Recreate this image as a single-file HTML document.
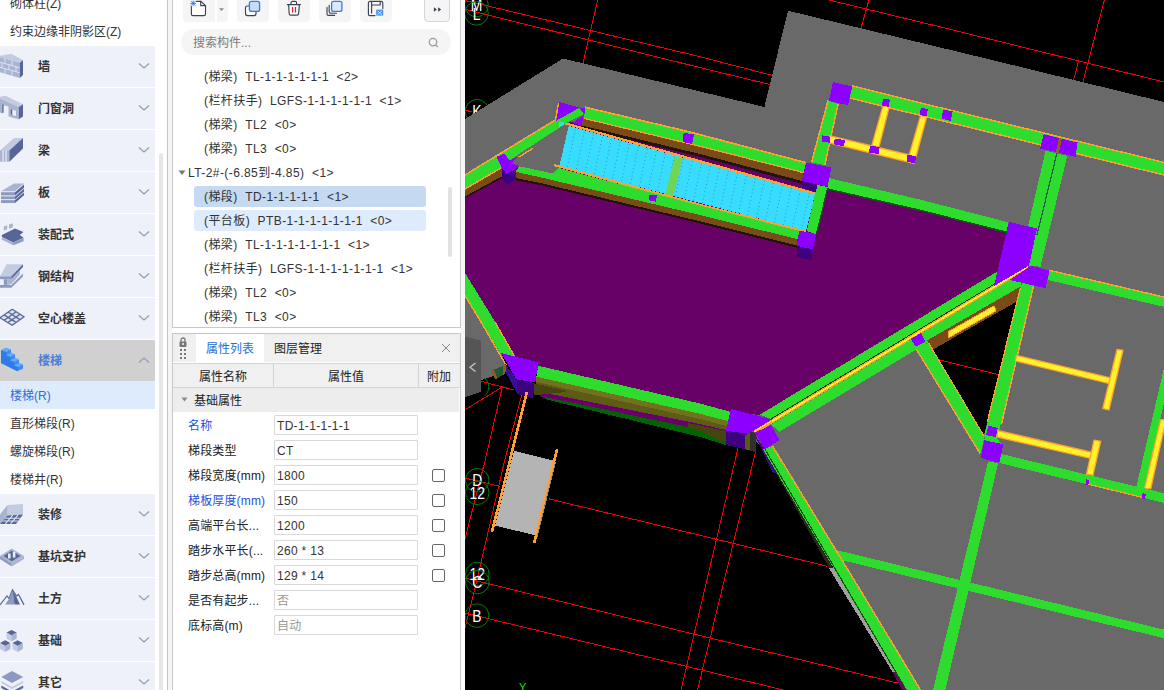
<!DOCTYPE html><html lang="zh"><head><meta charset="utf-8"><title>UI</title><style>
*{box-sizing:border-box;margin:0;padding:0}
html,body{width:1164px;height:690px;overflow:hidden;background:#fff}
body{position:relative;font-family:"Liberation Sans","Noto Sans CJK SC",sans-serif;font-size:12px;color:#333}
.abs{position:absolute}
.t{position:absolute;white-space:nowrap;line-height:16px;height:16px}
.cat{position:absolute;left:0;width:155px;height:40.5px;background:#EFF1F8}
.cat .lb{position:absolute;left:38px;top:13px;font-weight:bold;font-size:12px;line-height:16px;color:#333;white-space:nowrap}
.cat svg.ch{position:absolute;left:138px;top:16px}
.cat svg.ic{position:absolute;left:0;top:6px}
.sub{position:absolute;left:0;width:155px;height:28px}
.sub span{position:absolute;left:10px;top:7px;line-height:16px;white-space:nowrap}
.tb{position:absolute;top:-6px;height:28px;width:32px;background:#F5F5F5;border-radius:4px}
.li{position:absolute;left:204px;white-space:nowrap;line-height:16px;height:16px;color:#333;letter-spacing:0.42px}
.inp{position:absolute;left:274px;width:144px;height:20px;border:1px solid #D9D9D9;background:#fff;border-radius:1px}
.inp span{position:absolute;left:2px;top:2px;letter-spacing:0.3px;line-height:16px;white-space:nowrap}
.pl{position:absolute;left:188px;white-space:nowrap;line-height:16px;letter-spacing:0.15px}
.cb{position:absolute;left:432px;width:13px;height:13px;border:1px solid #666;border-radius:2px;background:#fff}
</style></head><body>
<div class="t" style="left:10px;top:-4px">砌体柱(Z)</div>
<div class="t" style="left:10px;top:24px">约束边缘非阴影区(Z)</div>
<div class="cat" style="top:46.0px;background:#EFF1F8"><svg class="ic" width="26" height="36" viewBox="0 0 26 36" style="top:7px"><polygon points="0,2.700 11.300,0.800 23,7 19.800,9.800 0,4.200" fill="#C3CBE2"/><polygon points="0,4.200 19.800,9.800 19.800,24.900 0,19.200" fill="#A9B4D2"/><polygon points="19.800,9.800 23,7 23,22 19.800,24.900" fill="#55679A"/><path d="M0 9.200 L19.800 14.800 M0 14.200 L19.800 19.800 M5 5.600 v5 M12 7.600 v5 M2 9.800 v5 M9 11.700 v5 M16 13.700 v5 M5 15.600 v5 M12 17.600 v5" stroke="#DDE2F0" stroke-width="1" fill="none"/></svg><div class="lb" style="color:#333">墙</div><svg class="ch" width="12" height="8" viewBox="0 0 12 8"><path d="M1 1.5 L6 6 L11 1.5" fill="none" stroke="#8F9BB8" stroke-width="1.2"/></svg></div>
<div class="cat" style="top:88.0px;background:#EFF1F8"><svg class="ic" width="26" height="36" viewBox="0 0 26 36" style="top:7px"><polygon points="0,1.700 5.600,0.800 23,9.300 18.800,12 0,3.600" fill="#C3CBE2"/><polygon points="0,3.600 18.800,12 18.800,24.300 8.500,21.500 8.500,11.600 2.200,9.800 2.200,18.200 0,17.600" fill="#A9B4D2"/><polygon points="18.800,12 23,9.300 23,21.600 18.800,24.300" fill="#55679A"/><polygon points="10.800,14.200 16,15.700 16,21 10.800,19.500" fill="#EFF1F8"/><polygon points="10.800,14.200 12.300,14.600 12.300,19.900 10.800,19.500" fill="#55679A"/><polygon points="2.200,9.800 3.600,9.300 3.600,17.400 2.200,18.200" fill="#55679A"/></svg><div class="lb" style="color:#333">门窗洞</div><svg class="ch" width="12" height="8" viewBox="0 0 12 8"><path d="M1 1.5 L6 6 L11 1.5" fill="none" stroke="#8F9BB8" stroke-width="1.2"/></svg></div>
<div class="cat" style="top:130.0px;background:#EFF1F8"><svg class="ic" width="26" height="36" viewBox="0 0 26 36" style="top:7px"><polygon points="0,13.400 14.100,1.100 23,1.100 9.400,13.400" fill="#C3CBE2"/><polygon points="0,13.400 9.400,13.400 9.400,24.700 0,24.700" fill="#A9B4D2"/><polygon points="9.400,13.400 23,1.100 23,11.500 9.400,24.700" fill="#55679A"/><path d="M3 13.400 v11.300 M6 13.400 v11.300" stroke="#EFF1F8" stroke-width="1.100"/></svg><div class="lb" style="color:#333">梁</div><svg class="ch" width="12" height="8" viewBox="0 0 12 8"><path d="M1 1.5 L6 6 L11 1.5" fill="none" stroke="#8F9BB8" stroke-width="1.2"/></svg></div>
<div class="cat" style="top:172.0px;background:#EFF1F8"><svg class="ic" width="26" height="36" viewBox="0 0 26 36" style="top:7px"><polygon points="1,12.300 14,4.600 24,4.600 15,12.300" fill="#A9B4D2"/><polygon points="1,13.200 15,13.200 15,16.400 1,16.400" fill="#8C9AC0"/><polygon points="15,13.200 24,5.500 24,8.700 15,16.400" fill="#55679A"/><polygon points="1,17.400 15,17.400 15,20.200 1,20.200" fill="#8C9AC0"/><polygon points="15,17.400 24,9.700 24,12.500 15,20.200" fill="#55679A"/><polygon points="1,21.100 15,21.100 15,24 1,24" fill="#8C9AC0"/><polygon points="15,21.100 24,13.400 24,16.300 15,24" fill="#55679A"/></svg><div class="lb" style="color:#333">板</div><svg class="ch" width="12" height="8" viewBox="0 0 12 8"><path d="M1 1.5 L6 6 L11 1.5" fill="none" stroke="#8F9BB8" stroke-width="1.2"/></svg></div>
<div class="cat" style="top:214.0px;background:#EFF1F8"><svg class="ic" width="26" height="36" viewBox="0 0 26 36" style="top:7px"><polygon points="3.800,5.500 7.200,4.200 7.200,8.300 3.800,9.600" fill="#A9B4D2"/><polygon points="9,3.600 12.800,2.300 12.800,6.400 9,7.700" fill="#A9B4D2"/><polygon points="1.900,14 15,7.400 23.500,11.100 19.800,14 23.500,16.800 13.200,21.500 1.900,15.900" fill="#55679A"/><polygon points="1.900,15.900 13.200,21.500 13.200,24.300 1.900,18.700" fill="#A9B4D2"/><polygon points="13.200,21.500 23.500,16.800 23.500,20.200 13.200,24.300" fill="#8C9AC0"/></svg><div class="lb" style="color:#333">装配式</div><svg class="ch" width="12" height="8" viewBox="0 0 12 8"><path d="M1 1.5 L6 6 L11 1.5" fill="none" stroke="#8F9BB8" stroke-width="1.2"/></svg></div>
<div class="cat" style="top:256.0px;background:#EFF1F8"><svg class="ic" width="26" height="36" viewBox="0 0 26 36" style="top:7px"><polygon points="6.600,1.200 23,1.200 11.300,13.400 0,13.400" fill="#C3CBE2"/><polygon points="0,13.400 11.300,13.400 11.300,16.200 0,16.200" fill="#8C9AC0"/><polygon points="11.300,13.400 23,1.200 23,4 11.300,16.200" fill="#55679A"/><polygon points="3.800,16.200 7.200,16.200 7.200,21.900 3.800,21.900" fill="#8C9AC0"/><polygon points="7.200,16.200 11.300,16.200 19.800,7.500 19.800,11.500 11.300,21 7.200,21.900" fill="#A9B4D2"/><polygon points="0,21.900 11.300,21.900 23,10.600 23,13.400 11.300,24.700 0,24.700" fill="#8C9AC0"/></svg><div class="lb" style="color:#333">钢结构</div><svg class="ch" width="12" height="8" viewBox="0 0 12 8"><path d="M1 1.5 L6 6 L11 1.5" fill="none" stroke="#8F9BB8" stroke-width="1.2"/></svg></div>
<div class="cat" style="top:298.0px;background:#EFF1F8"><svg class="ic" width="26" height="36" viewBox="0 0 26 36" style="top:7px"><polygon points="0,12.700 12.200,4.200 24,11.700 12.200,20.200" fill="#DDE2EF"/><path d="M0 12.700 L12.200 4.200 L24 11.700 L12.200 20.200 Z M4 9.900 L16.100 17.400 M8.100 7 L20 14.600 M4 15.500 L16.100 6.700 M8.100 17.400 L20 9.200" stroke="#55679A" stroke-width="1.300" fill="none"/></svg><div class="lb" style="color:#333">空心楼盖</div><svg class="ch" width="12" height="8" viewBox="0 0 12 8"><path d="M1 1.5 L6 6 L11 1.5" fill="none" stroke="#8F9BB8" stroke-width="1.2"/></svg></div>
<div class="cat" style="top:340.0px;background:#D0D0D0"><svg class="ic" width="26" height="36" viewBox="0 0 26 36" style="top:2px"><g transform="translate(0,0.760) scale(1,0.840)"><polygon points="1,9 6,6 11,8 11,12 15,14 15,18 19,20 19,24 23,26 23,31 17,34 1,24" fill="#3E8BEF"/><polygon points="1,9 6,6 11,8 6,11" fill="#6AAAF8"/><polygon points="6,15 11,12 15,14 10,17" fill="#6AAAF8"/><polygon points="10,21 15,18 19,20 14,23" fill="#6AAAF8"/><polygon points="14,27 19,24 23,26 18,29" fill="#6AAAF8"/><polygon points="1,9 6,11 6,15 10,17 10,21 14,23 14,27 18,29 18,34 1,24" fill="#2F7BE8"/></g></svg><div class="lb" style="color:#4A7DD8">楼梯</div><svg class="ch" width="12" height="8" viewBox="0 0 12 8"><path d="M1 6.5 L6 2 L11 6.5" fill="none" stroke="#8F9BB8" stroke-width="1.2"/></svg></div>
<div class="sub" style="top:381px;background:#DEEBFC"><span style="color:#2E6BD6">楼梯(R)</span></div>
<div class="sub" style="top:409px"><span>直形梯段(R)</span></div>
<div class="sub" style="top:437px"><span>螺旋梯段(R)</span></div>
<div class="sub" style="top:465px"><span>楼梯井(R)</span></div>
<div class="cat" style="top:494.0px;background:#EFF1F8"><svg class="ic" width="26" height="36" viewBox="0 0 26 36" style="top:7px"><polygon points="7.500,4 23,3.100 23,13.500 7.500,14.400" fill="#C3CBE2"/><polygon points="0,13.500 7.500,4 7.500,14.400 0,22.900" fill="#A9B4D2"/><polygon points="0,22.900 7.500,14.400 23,13.500 16,22.900" fill="#55679A"/><path d="M2.500 20 h15.500 M5 17.200 h15.500 M5.300 22.900 l7.500 -8.800 M10.600 22.900 l7.500 -9" stroke="#DDE2F0" stroke-width="1.100"/></svg><div class="lb" style="color:#333">装修</div><svg class="ch" width="12" height="8" viewBox="0 0 12 8"><path d="M1 1.5 L6 6 L11 1.5" fill="none" stroke="#8F9BB8" stroke-width="1.2"/></svg></div>
<div class="cat" style="top:536.0px;background:#EFF1F8"><svg class="ic" width="26" height="36" viewBox="0 0 26 36" style="top:7px"><polygon points="0,12.900 11.700,5.400 24,12.900 11.700,20.500" fill="#A9B4D2"/><polygon points="0,12.900 11.700,20.500 11.700,23.500 0,15.900" fill="#8C9AC0"/><polygon points="11.700,20.500 24,12.900 24,15.900 11.700,23.500" fill="#A9B4D2"/><polygon points="3.500,12.900 11.700,7.700 20.500,12.900 11.700,18.200" fill="#55679A"/><rect x="8" y="10.500" width="2.600" height="5" fill="#E6EAF5"/><rect x="12.800" y="8.600" width="2.600" height="6" fill="#E6EAF5"/></svg><div class="lb" style="color:#333">基坑支护</div><svg class="ch" width="12" height="8" viewBox="0 0 12 8"><path d="M1 1.5 L6 6 L11 1.5" fill="none" stroke="#8F9BB8" stroke-width="1.2"/></svg></div>
<div class="cat" style="top:578.0px;background:#EFF1F8"><svg class="ic" width="26" height="36" viewBox="0 0 26 36" style="top:7px"><path d="M0 19.900 L7 11 L9 13.500 L12.500 4.800 L16.500 11 L18.500 9.500 L24 19.900" fill="none" stroke="#55679A" stroke-width="1.200"/><polygon points="9,14 12.500,5.500 14.500,19.500 5,19.500" fill="#8C9AC0"/><polygon points="12.500,5.500 16.500,12 20,19.500 14.500,19.500" fill="#55679A"/></svg><div class="lb" style="color:#333">土方</div><svg class="ch" width="12" height="8" viewBox="0 0 12 8"><path d="M1 1.5 L6 6 L11 1.5" fill="none" stroke="#8F9BB8" stroke-width="1.2"/></svg></div>
<div class="cat" style="top:620.0px;background:#EFF1F8"><svg class="ic" width="26" height="36" viewBox="0 0 26 36" style="top:7px"><polygon points="6.500,5.600 11.500,3 16.700,5.600 11.500,8.500" fill="#55679A"/><polygon points="6.500,5.600 11.500,8.500 11.500,14.500 6.500,11.500" fill="#C3CBE2"/><polygon points="11.500,8.500 16.700,5.600 16.700,11.500 11.500,14.500" fill="#A9B4D2"/><polygon points="0,16.100 5.200,13.200 10.400,16.100 5.200,19" fill="#55679A"/><polygon points="0,16.100 5.200,19 5.200,25 0,22" fill="#C3CBE2"/><polygon points="5.200,19 10.400,16.100 10.400,22 5.200,25" fill="#A9B4D2"/><polygon points="12.400,16.100 17.600,13.200 22.800,16.100 17.600,19" fill="#55679A"/><polygon points="12.400,16.100 17.600,19 17.600,25 12.400,22" fill="#C3CBE2"/><polygon points="17.600,19 22.800,16.100 22.800,22 17.600,25" fill="#A9B4D2"/></svg><div class="lb" style="color:#333">基础</div><svg class="ch" width="12" height="8" viewBox="0 0 12 8"><path d="M1 1.5 L6 6 L11 1.5" fill="none" stroke="#8F9BB8" stroke-width="1.2"/></svg></div>
<div class="cat" style="top:662.0px;background:#EFF1F8"><svg class="ic" width="26" height="36" viewBox="0 0 26 36" style="top:7px"><polygon points="1.300,16.500 12,22.400 23.200,16.500 23.200,19 12,25 1.300,19" fill="#55679A"/><polygon points="1.300,11.900 12,17.800 23.200,11.900 23.200,14 12,20 1.300,14" fill="#C3CBE2"/><polygon points="1.300,8 12,2.100 23.200,8 12,13.900" fill="#8C9AC0"/></svg><div class="lb" style="color:#333">其它</div><svg class="ch" width="12" height="8" viewBox="0 0 12 8"><path d="M1 1.5 L6 6 L11 1.5" fill="none" stroke="#8F9BB8" stroke-width="1.2"/></svg></div>
<div class="abs" style="left:159px;top:153px;width:4px;height:540px;background:#E6E6E6;border-radius:2px"></div>
<div class="abs" style="left:167px;top:0;width:1px;height:690px;background:#C4C4C4"></div>
<div class="abs" style="left:168px;top:0;width:4px;height:690px;background:#F5F5F5"></div>
<div class="abs" style="left:172px;top:-2px;width:289px;height:330px;border:1px solid #C8C8C8;background:#fff"></div>
<div class="tb" style="left:183px;width:45px"></div><div class="abs" style="left:215px;top:0;width:1.5px;height:22px;background:#fff"></div>
<div class="tb" style="left:237px"></div>
<div class="tb" style="left:278px"></div>
<div class="tb" style="left:319px"></div>
<div class="tb" style="left:360px"></div>
<div class="tb" style="left:424px;width:26px;border:1px solid #D6D6D6"></div>
<svg class="abs" style="left:176px;top:0" width="280" height="24" viewBox="176 0 280 24">
<g fill="none" stroke="#3A4356" stroke-width="1.15" stroke-linejoin="round" stroke-linecap="round">
<path d="M196.500 1.300 H200.700 L205.500 5.600 V14 a1.600 1.600 0 0 1 -1.600 1.600 H193 a1.600 1.600 0 0 1 -1.600 -1.600 V6.500" fill="#fff"/><path d="M200.700 1.300 V5.600 H205.500"/>
<rect x="245.500" y="6" width="10.500" height="9.600" rx="2" fill="#fff"/>
<path d="M287.300 4.600 H300.500 M291 4.600 V3 a1.600 1.600 0 0 1 1.600 -1.600 H295 a1.600 1.600 0 0 1 1.600 1.600 V4.600 M288.600 4.600 L289.200 13.600 a1.600 1.600 0 0 0 1.600 1.500 H297 a1.600 1.600 0 0 0 1.600 -1.500 L299.400 4.600" fill="#fff"/>
<path d="M329.200 5.400 V11.600 a1.600 1.600 0 0 0 1.600 1.600 H336.500 M327 7.400 V13.800 a1.600 1.600 0 0 0 1.600 1.600 H334.600"/>
<path d="M375 15.600 H370 a1.600 1.600 0 0 1 -1.600 -1.600 V3 a1.600 1.600 0 0 1 1.600 -1.600 H381.200 a1.600 1.600 0 0 1 1.600 1.600 V8.400 M371.600 1.400 V13 M371.600 5 H380.200 M380.200 1.400 V5"/>
</g>
<path d="M191 1.200 l4.400 4.400 M195.400 1.200 l-4.400 4.400 M193.200 0.600 v5.600 M190.400 3.400 h5.600" stroke="#2E7BE6" stroke-width="0.900"/>
<polygon points="219,8.200 224,8.200 221.500,11" fill="#8A8A8A"/>
<rect x="249.400" y="1.400" width="10.200" height="10" rx="2" fill="#C8DBF6" stroke="#2D7FF0" stroke-width="1.300"/>
<path d="M292.600 7 V12.600 M295.500 7 V12.600" stroke="#E02020" stroke-width="1.200"/>
<rect x="331.600" y="1.400" width="10.300" height="10" rx="2" fill="#DDE9FB" stroke="#2D7FF0" stroke-width="1.300"/>
<rect x="376.200" y="9.600" width="7" height="6" fill="#4A90F0"/><path d="M377.500 11 l4.400 3.400 M381.900 11 l-4.400 3.400" stroke="#DCE9FB" stroke-width="0.900"/>
<polygon points="433.900,7.200 436.900,9.500 433.900,11.800" fill="#3A4356"/><polygon points="438.100,7.200 441.200,9.500 438.100,11.800" fill="#3A4356"/>
</svg>
<div class="abs" style="left:181px;top:29px;width:270px;height:26px;border-radius:13px;background:#F5F5F5"></div>
<div class="t" style="left:193px;top:35px;color:#7C7C7C">搜索构件...</div>
<svg class="abs" style="left:427px;top:36px" width="14" height="14" viewBox="427 36 14 14"><circle cx="433" cy="42.100" r="3.700" fill="none" stroke="#9A9A9A" stroke-width="1.200"/><path d="M435.700 44.800 L437.800 47" stroke="#9A9A9A" stroke-width="1.200"/></svg>
<div class="abs" style="left:194px;top:186px;width:232px;height:21px;background:#C5D9F1;border-radius:3px"></div>
<div class="abs" style="left:194px;top:210px;width:232px;height:21px;background:#DDEBFC;border-radius:3px"></div>
<div class="li" style="top:69px;white-space:pre">(梯梁)  TL-1-1-1-1-1-1  &lt;2&gt;</div>
<div class="li" style="top:93px;white-space:pre">(栏杆扶手)  LGFS-1-1-1-1-1-1  &lt;1&gt;</div>
<div class="li" style="top:117px;white-space:pre">(梯梁)  TL2  &lt;0&gt;</div>
<div class="li" style="top:141px;white-space:pre">(梯梁)  TL3  &lt;0&gt;</div>
<div class="li" style="top:189px;white-space:pre">(梯段)  TD-1-1-1-1-1  &lt;1&gt;</div>
<div class="li" style="top:213px;white-space:pre">(平台板)  PTB-1-1-1-1-1-1-1  &lt;0&gt;</div>
<div class="li" style="top:237px;white-space:pre">(梯梁)  TL-1-1-1-1-1-1-1  &lt;1&gt;</div>
<div class="li" style="top:261px;white-space:pre">(栏杆扶手)  LGFS-1-1-1-1-1-1-1  &lt;1&gt;</div>
<div class="li" style="top:285px;white-space:pre">(梯梁)  TL2  &lt;0&gt;</div>
<div class="li" style="top:309px;white-space:pre">(梯梁)  TL3  &lt;0&gt;</div>
<div class="li" style="left:188px;top:165px;white-space:pre">LT-2#-(-6.85到-4.85)  &lt;1&gt;</div>
<svg class="abs" style="left:178px;top:170px" width="8" height="6" viewBox="0 0 8 6"><polygon points="0.500,0.500 7.500,0.500 4,5" fill="#777"/></svg>
<div class="abs" style="left:448px;top:187px;width:4px;height:70px;background:#E2E2E2;border-radius:2px"></div>
<div class="abs" style="left:172px;top:333px;width:289px;height:360px;border:1px solid #C8C8C8;background:#fff"></div>
<div class="abs" style="left:173px;top:334px;width:287px;height:28px;background:#F0F0F0"></div>
<div class="abs" style="left:196px;top:334px;width:68px;height:28px;background:#fff"></div>
<div class="t" style="left:206px;top:341px;color:#1E6FD9">属性列表</div>
<div class="t" style="left:274px;top:341px;color:#222">图层管理</div>
<svg class="abs" style="left:441px;top:343px" width="10" height="10" viewBox="0 0 10 10"><path d="M1 1 L9 9 M9 1 L1 9" stroke="#888" stroke-width="1"/></svg>
<svg class="abs" style="left:178px;top:336px" width="10" height="24" viewBox="0 0 10 24"><path d="M3 6 v-2 a2 2 0 0 1 4 0 v2" fill="none" stroke="#777" stroke-width="1.300"/><rect x="1.500" y="5.500" width="7" height="5.500" rx="1" fill="#777"/><rect x="4.300" y="7" width="1.400" height="2" fill="#fff"/>
<g fill="#777"><rect x="2" y="13" width="2" height="2"/><rect x="6" y="13" width="2" height="2"/><rect x="2" y="17" width="2" height="2"/><rect x="6" y="17" width="2" height="2"/><rect x="2" y="21" width="2" height="2"/><rect x="6" y="21" width="2" height="2"/></g></svg>
<div class="abs" style="left:173px;top:363px;width:287px;height:25px;background:#F0F0F0;border-top:1px solid #D4D4D4;border-bottom:1px solid #D4D4D4"></div>
<div class="abs" style="left:273px;top:363px;width:1px;height:24px;background:#D4D4D4"></div><div class="abs" style="left:418px;top:363px;width:1px;height:24px;background:#D4D4D4"></div>
<div class="t" style="left:199px;top:369px;color:#222">属性名称</div><div class="t" style="left:328px;top:369px;color:#222">属性值</div><div class="t" style="left:427px;top:369px;color:#222">附加</div>
<div class="abs" style="left:173px;top:388px;width:286px;height:24px;background:#EDEDED"></div>
<svg class="abs" style="left:181px;top:397px" width="7" height="5" viewBox="0 0 7 5"><polygon points="0.500,0.500 6.500,0.500 3.500,4.500" fill="#888"/></svg>
<div class="t" style="left:194px;top:393px;color:#222">基础属性</div>
<div class="pl" style="top:418px;color:#1F4FE0">名称</div>
<div class="inp" style="top:415px"><span style="color:#333">TD-1-1-1-1-1</span></div>
<div class="pl" style="top:443px;color:#222">梯段类型</div>
<div class="inp" style="top:440px"><span style="color:#333">CT</span></div>
<div class="pl" style="top:468px;color:#222">梯段宽度(mm)</div>
<div class="inp" style="top:465px"><span style="color:#333">1800</span></div>
<div class="cb" style="top:468.5px"></div>
<div class="pl" style="top:493px;color:#1F4FE0">梯板厚度(mm)</div>
<div class="inp" style="top:490px"><span style="color:#333">150</span></div>
<div class="cb" style="top:493.5px"></div>
<div class="pl" style="top:518px;color:#222">高端平台长...</div>
<div class="inp" style="top:515px"><span style="color:#333">1200</span></div>
<div class="cb" style="top:518.5px"></div>
<div class="pl" style="top:543px;color:#222">踏步水平长(...</div>
<div class="inp" style="top:540px"><span style="color:#333">260 * 13</span></div>
<div class="cb" style="top:543.5px"></div>
<div class="pl" style="top:568px;color:#222">踏步总高(mm)</div>
<div class="inp" style="top:565px"><span style="color:#333">129 * 14</span></div>
<div class="cb" style="top:568.5px"></div>
<div class="pl" style="top:593px;color:#222">是否有起步...</div>
<div class="inp" style="top:590px"><span style="color:#999">否</span></div>
<div class="pl" style="top:618px;color:#222">底标高(m)</div>
<div class="inp" style="top:615px"><span style="color:#999">自动</span></div>
<div class="abs" style="left:461px;top:0;width:4px;height:690px;background:#F6F6F6"></div>
<div class="abs" style="left:461px;top:600px;width:4px;height:90px;background:#fff"></div>
<svg class="abs" style="left:465px;top:0;background:#000" width="699" height="690" viewBox="465 0 699 690" shape-rendering="crispEdges">
<defs><pattern id="dots" width="9" height="3.6" patternUnits="userSpaceOnUse" patternTransform="matrix(1 0.27 -0.21 1 0 0)"><rect width="9" height="3.6" fill="#38DCFF"/><rect x="3" y="1" width="1" height="1" fill="#2E8CB4"/></pattern></defs>
<line x1="465.0" y1="0.5" x2="700.0" y2="56.7" stroke="#F00000" stroke-width="1"/>
<line x1="700.0" y1="56.7" x2="772.0" y2="75.3" stroke="#F00000" stroke-width="1"/>
<line x1="465.0" y1="9.3" x2="700.0" y2="67.6" stroke="#F00000" stroke-width="1"/>
<line x1="700.0" y1="67.6" x2="770.0" y2="84.5" stroke="#F00000" stroke-width="1"/>
<line x1="597.7" y1="0.0" x2="583.0" y2="63.0" stroke="#F00000" stroke-width="1"/>
<line x1="829.0" y1="0.0" x2="940.0" y2="26.8" stroke="#F00000" stroke-width="1"/>
<line x1="940.0" y1="26.8" x2="1164.0" y2="82.0" stroke="#F00000" stroke-width="1"/>
<line x1="869.0" y1="0.0" x2="861.0" y2="28.0" stroke="#F00000" stroke-width="1"/>
<line x1="1104.4" y1="0.0" x2="1082.8" y2="82.5" stroke="#F00000" stroke-width="1"/>
<line x1="1078.6" y1="60.8" x2="1073.5" y2="80.4" stroke="#F00000" stroke-width="1"/>
<line x1="465.0" y1="110.0" x2="472.0" y2="112.0" stroke="#F00000" stroke-width="1"/>
<line x1="502.3" y1="387.0" x2="465.0" y2="409.7" stroke="#F00000" stroke-width="1"/>
<line x1="502.3" y1="387.0" x2="484.7" y2="462.0" stroke="#F00000" stroke-width="1"/>
<line x1="484.7" y1="462.0" x2="465.0" y2="539.0" stroke="#F00000" stroke-width="1"/>
<line x1="521.9" y1="394.2" x2="504.3" y2="462.0" stroke="#F00000" stroke-width="1"/>
<line x1="504.3" y1="462.0" x2="476.5" y2="582.0" stroke="#F00000" stroke-width="1"/>
<line x1="476.5" y1="582.0" x2="465.0" y2="628.0" stroke="#F00000" stroke-width="1"/>
<line x1="480.0" y1="381.0" x2="514.0" y2="390.0" stroke="#F00000" stroke-width="1"/>
<line x1="465.0" y1="478.0" x2="500.0" y2="486.4" stroke="#F00000" stroke-width="1"/>
<line x1="548.7" y1="498.8" x2="700.0" y2="535.3" stroke="#F00000" stroke-width="1"/>
<line x1="700.0" y1="535.3" x2="827.0" y2="566.2" stroke="#F00000" stroke-width="1"/>
<line x1="465.0" y1="578.0" x2="700.0" y2="635.6" stroke="#F00000" stroke-width="1"/>
<line x1="700.0" y1="635.6" x2="897.5" y2="683.0" stroke="#F00000" stroke-width="1"/>
<line x1="465.0" y1="613.0" x2="700.0" y2="669.6" stroke="#F00000" stroke-width="1"/>
<line x1="700.0" y1="669.6" x2="783.0" y2="690.0" stroke="#F00000" stroke-width="1"/>
<line x1="738.0" y1="448.0" x2="681.0" y2="690.0" stroke="#F00000" stroke-width="1"/>
<line x1="755.7" y1="451.3" x2="697.5" y2="690.0" stroke="#F00000" stroke-width="1"/>
<circle cx="477" cy="111.3" r="11.8" fill="none" stroke="#008000" stroke-width="1" shape-rendering="auto"/><text transform="translate(477,117.4) scale(0.82,1)" text-anchor="middle" font-family='"Liberation Sans",sans-serif' font-size="17" fill="#fff">K</text>
<polygon points="465.0,119.0 563.0,58.5 764.4,107.0 788.0,10.7 992.0,60.0 1164.0,102.0 1164.0,690.0 907.0,690.0 766.0,450.0 745.0,432.0 731.0,412.0 520.0,365.0 465.0,273.0" fill="#696969"/>
<polygon points="465.0,293.0 502.0,355.0 506.0,365.0 506.0,372.0 481.0,380.0 465.0,385.0" fill="#696969"/>
<polygon points="465.0,195.0 506.0,172.0 560.0,120.0 806.0,165.0 830.0,185.0 1010.0,225.0 1000.0,283.0 760.0,415.0 731.0,412.0 538.0,366.0 514.0,356.0 465.0,273.0" fill="#670067"/>
<polygon points="581.6,125.4 700.0,154.0 802.0,181.0 802.0,183.8 700.0,156.8 581.6,128.2" fill="#1E1408"/>
<polygon points="567.0,125.4 815.0,194.4 806.0,231.0 559.0,166.0" fill="url(#dots)"/>
<polygon points="674.4,157.3 682.7,158.4 673.4,196.5 665.2,194.4" fill="#70D458"/>
<polygon points="570.0,120.0 557.2,176.0 506.0,163.0" fill="#696969"/>
<polygon points="563.7,124.1 699.7,162.3 700.3,160.1 564.3,121.9" fill="#FFA030"/>
<polygon points="699.7,162.3 814.7,194.5 815.3,192.3 700.3,160.1" fill="#FFA030"/>
<polygon points="553.5,166.0 699.7,205.8 700.3,203.8 554.1,164.0" fill="#FFA030"/>
<polygon points="699.8,205.8 805.6,232.5 806.0,230.5 700.2,203.8" fill="#FFA030"/>
<polygon points="557.8,172.8 639.8,191.3 640.2,189.7 558.2,171.2" fill="#FFA030"/>
<polygon points="585.0,108.0 690.0,132.8 806.0,163.5 803.7,172.4 700.0,146.0 583.7,118.0" fill="#2EDC2E"/>
<polygon points="583.7,118.0 700.0,146.0 803.7,172.4 802.0,181.0 700.0,154.0 581.6,125.4" fill="#7A4A18"/>
<polygon points="584.8,108.0 689.8,132.8 690.2,131.2 585.2,106.4" fill="#FFA030"/>
<polygon points="689.8,132.8 805.8,163.5 806.2,161.9 690.2,131.2" fill="#FFA030"/>
<polygon points="583.6,118.9 699.9,146.9 700.1,145.7 583.8,117.7" fill="#FFA030"/>
<polygon points="699.9,146.9 803.6,173.3 803.8,172.1 700.1,145.7" fill="#FFA030"/>
<polygon points="518.8,166.2 553.0,173.5 559.0,168.0 700.0,205.5 799.6,231.0 797.5,239.2 700.0,215.0 540.0,177.2 515.7,171.8" fill="#2EDC2E"/>
<polygon points="515.7,171.8 540.0,177.2 700.0,215.0 797.5,239.2 796.5,245.4 700.0,221.3 540.0,182.9 515.7,178.0" fill="#7A4A18"/>
<polygon points="515.7,178.0 540.0,182.9 700.0,221.3 796.5,245.4 796.5,247.6 700.0,223.5 540.0,185.1 515.7,180.2" fill="#1E1408"/>
<polygon points="465.0,175.4 554.0,121.2 579.0,108.2 584.0,114.1 570.2,120.7 509.3,160.3 501.0,167.8 465.0,188.9" fill="#2EDC2E"/>
<polygon points="502.0,167.6 465.0,188.9 465.0,196.7 502.0,176.5" fill="#7A4A18"/>
<polygon points="501.6,176.5 464.6,196.7 465.4,198.1 502.4,177.9" fill="#1E1408"/>
<polygon points="555.6,118.9 464.6,174.3 465.4,175.7 556.4,120.3" fill="#FFA030"/>
<polygon points="500.7,167.4 464.6,188.4 465.4,189.6 501.5,168.6" fill="#FFA030"/>
<polygon points="518.8,157.8 533.3,148.9 532.7,147.7 518.2,156.6" fill="#FFA030"/>
<polygon points="817.0,185.0 806.8,231.0 816.0,234.0 827.4,187.0" fill="#2EDC2E"/>
<polygon points="827.3,186.8 815.9,233.8 817.3,234.2 828.7,187.2" fill="#145014"/>
<polygon points="559.3,102.2 580.0,107.4 556.5,120.6" fill="#8C00FF"/>
<polygon points="572.5,123.0 583.8,115.0 581.6,125.5" fill="#8C00FF"/>
<polygon points="579.0,107.2 585.5,108.7 584.3,114.5" fill="#8C00FF"/>
<polygon points="559.3,122.3 564.2,122.3 563.7,125.0 558.8,127.2" fill="#38DCFF"/>
<polygon points="557.9,102.9 554.6,120.5 556.0,120.7 559.3,103.1" fill="#FFA030"/>
<polygon points="496.3,157.0 504.3,153.5 509.4,160.4 517.7,157.0 511.6,163.5 519.0,166.0 514.2,170.0 506.3,174.0 502.0,167.8" fill="#8C00FF"/>
<polygon points="502.0,167.8 506.3,174.0 514.2,170.0 515.0,180.0 506.8,185.2 502.4,178.3" fill="#3D0080"/>
<polygon points="649.7,194.4 657.0,195.5 656.0,201.6 648.7,200.2" fill="#8C00FF"/>
<polygon points="683.7,132.6 694.0,134.6 692.0,144.0 682.7,141.9" fill="#8C00FF"/>
<polygon points="799.6,230.5 816.0,234.0 813.0,249.5 796.5,245.8" fill="#8C00FF"/>
<polygon points="796.5,245.8 813.0,249.5 811.5,260.2 796.5,256.7" fill="#3D0080"/>
<polygon points="828.5,100.6 812.0,162.5 824.3,165.0 837.7,103.7" fill="#2EDC2E"/>
<polygon points="827.3,100.4 810.8,162.3 812.2,162.7 828.7,100.8" fill="#FFA030"/>
<polygon points="837.5,103.6 824.1,164.9 825.5,165.1 838.9,103.8" fill="#FFA030"/>
<polygon points="851.5,86.2 924.0,104.3 1164.0,163.0 1164.0,174.4 924.0,115.7 850.0,97.5" fill="#2EDC2E"/>
<polygon points="851.3,86.3 923.8,104.4 924.2,103.0 851.7,84.9" fill="#FFA030"/>
<polygon points="923.8,104.4 1163.8,163.1 1164.2,161.7 924.2,103.0" fill="#FFA030"/>
<polygon points="849.8,98.8 923.8,117.0 924.2,115.6 850.2,97.4" fill="#FFA030"/>
<polygon points="923.8,117.0 1163.8,175.7 1164.2,174.3 924.2,115.6" fill="#FFA030"/>
<polygon points="829.5,135.7 915.0,156.3 914.0,163.5 829.5,142.9" fill="#FFF22A" stroke="#FFA030" stroke-width="1.3" shape-rendering="geometricPrecision"/>
<polygon points="883.0,105.8 889.3,106.8 879.0,147.0 871.8,145.6" fill="#FFF22A" stroke="#FFA030" stroke-width="1.3" shape-rendering="geometricPrecision"/>
<polygon points="920.6,115.5 926.8,116.5 916.0,157.0 909.0,155.5" fill="#FFF22A" stroke="#FFA030" stroke-width="1.3" shape-rendering="geometricPrecision"/>
<polygon points="883.0,98.6 890.0,99.6 888.7,106.8 882.0,105.8" fill="#8C00FF"/>
<polygon points="921.0,107.6 927.8,109.3 926.4,116.5 919.6,114.8" fill="#8C00FF"/>
<polygon points="943.0,109.5 952.5,111.5 950.8,120.8 941.5,118.8" fill="#8C00FF"/>
<polygon points="822.3,135.3 830.5,136.7 829.5,142.9 821.9,141.4" fill="#8C00FF"/>
<polygon points="834.6,138.4 845.0,140.2 844.0,146.4 834.2,144.3" fill="#8C00FF"/>
<polygon points="869.7,145.6 879.6,147.0 879.0,154.2 869.3,152.6" fill="#8C00FF"/>
<polygon points="907.4,154.6 916.0,156.3 915.0,163.5 906.8,161.4" fill="#8C00FF"/>
<polygon points="833.0,82.0 852.2,86.6 848.0,105.2 828.9,101.0" fill="#8C00FF"/>
<polygon points="827.4,188.2 920.0,209.5 1006.5,231.5 1006.5,233.1 920.0,211.1 827.4,189.8" fill="#0A5A0A"/>
<polygon points="828.5,178.0 920.0,199.6 1008.5,222.3 1006.5,231.5 920.0,209.5 827.4,188.2" fill="#2EDC2E"/>
<polygon points="806.2,162.5 831.5,167.6 827.4,186.8 802.0,181.0" fill="#8C00FF"/>
<polygon points="802.0,181.0 817.0,184.7 816.0,192.4 802.0,188.0" fill="#3D0080"/>
<polygon points="1045.6,150.7 1028.0,226.4 1029.0,266.0 1040.5,266.6 1040.5,266.6 1067.3,155.9" fill="#2EDC2E"/>
<polygon points="1056.4,152.7 1036.4,234.9 1037.6,235.1 1057.6,152.9" fill="#1E5A46"/>
<polygon points="1043.6,134.2 1059.0,138.0 1056.0,151.8 1040.0,148.7" fill="#8C00FF"/>
<polygon points="1061.7,138.8 1077.6,142.5 1075.5,157.0 1059.0,152.8" fill="#8C00FF"/>
<polygon points="1059.0,138.0 1061.7,138.8 1059.0,152.8 1056.0,151.8" fill="#8A6414"/>
<polygon points="1003.0,268.0 759.8,414.6 772.0,419.4 1012.0,274.3" fill="#2EDC2E"/>
<polygon points="1022.0,272.5 771.0,424.5 779.4,431.6 1020.8,286.8" fill="#2EDC2E"/>
<polygon points="1009.6,274.4 769.6,419.2 770.4,420.4 1010.4,275.6" fill="#0A3C0A"/>
<polygon points="1027.0,264.9 753.6,430.1 755.6,433.5 1029.0,268.3" fill="#FFA030"/>
<polygon points="1027.6,265.9 754.2,431.1 755.0,432.5 1028.4,267.3" fill="#FFF22A"/>
<polygon points="1019.8,287.0 1016.7,301.6 932.2,350.0 927.0,340.5" fill="#7A4A18"/>
<polygon points="1016.7,301.6 983.8,436.0 932.2,350.0" fill="#000"/>
<line x1="937.3" y1="359.4" x2="999.0" y2="374.8" stroke="#F00000" stroke-width="1"/>
<polygon points="948.7,331.5 994.0,305.8 996.0,311.0 948.7,337.7" fill="#FFF22A" stroke="#FFA030" stroke-width="1"/>
<polygon points="916.7,349.0 980.7,453.6 984.5,437.0 928.0,342.9" fill="#2EDC2E"/>
<polygon points="915.6,349.4 979.6,454.0 980.8,453.2 916.8,348.6" fill="#FFA030"/>
<polygon points="928.0,343.2 983.5,436.3 984.5,435.7 929.0,342.6" fill="#FFA030"/>
<polygon points="1022.5,281.0 987.8,422.0 984.0,437.0 996.0,440.0 1001.5,422.0 1034.5,280.0" fill="#2EDC2E"/>
<polygon points="1019.7,287.9 986.7,421.9 987.9,422.1 1020.9,288.1" fill="#FFA030"/>
<polygon points="1032.8,285.8 1000.8,423.8 1002.2,424.2 1034.2,286.2" fill="#FFA030"/>
<polygon points="910.5,338.8 920.8,333.2 925.6,341.9 915.7,346.4" fill="#8C00FF"/>
<polygon points="1009.0,221.9 1037.0,228.5 1029.0,265.6 994.0,286.0" fill="#8C00FF"/>
<polygon points="1031.0,265.6 1049.4,270.7 1045.6,288.2 1009.6,280.0" fill="#8C00FF"/>
<polygon points="1049.4,270.7 1164.0,297.5 1164.0,306.8 1047.7,280.0" fill="#2EDC2E"/>
<polygon points="1049.2,271.0 1163.8,297.8 1164.2,296.4 1049.6,269.6" fill="#FFA030"/>
<polygon points="1016.4,355.3 1111.8,378.2 1110.0,383.8 1015.5,361.0" fill="#FFF22A" stroke="#FFA030" stroke-width="1.3" shape-rendering="geometricPrecision"/>
<polygon points="1117.0,349.5 1123.0,350.2 1109.0,410.0 1102.8,408.6" fill="#FFF22A" stroke="#FFA030" stroke-width="1.3" shape-rendering="geometricPrecision"/>
<polygon points="997.8,430.5 1093.0,452.6 1092.0,458.8 997.0,437.0" fill="#FFF22A" stroke="#FFA030" stroke-width="1.3" shape-rendering="geometricPrecision"/>
<polygon points="1094.0,440.2 1100.7,441.2 1093.0,475.3 1086.5,474.2" fill="#FFF22A" stroke="#FFA030" stroke-width="1.3" shape-rendering="geometricPrecision"/>
<polygon points="1164.0,368.0 1136.4,486.6 1144.2,488.7 1172.0,368.0" fill="#2EDC2E"/>
<polygon points="1160.5,419.6 1166.0,419.6 1150.8,488.7 1144.5,488.7" fill="#FFF22A" stroke="#FFA030" stroke-width="1.3" shape-rendering="geometricPrecision"/>
<polygon points="1001.3,454.0 1164.0,493.2 1164.0,503.0 999.3,462.9" fill="#2EDC2E"/>
<polygon points="1085.8,484.2 1142.8,498.2 1143.2,497.0 1086.2,483.0" fill="#FFA030"/>
<polygon points="1086.3,479.4 1089.6,480.0 1088.3,485.0 1085.4,484.5" fill="#8C00FF"/>
<polygon points="1142.6,493.2 1146.0,493.8 1145.0,499.0 1142.0,498.4" fill="#8C00FF"/>
<polygon points="988.0,461.9 933.0,690.0 945.3,690.0 998.2,462.9" fill="#2EDC2E"/>
<polygon points="835.0,549.7 1164.0,629.6 1164.0,638.2 841.2,560.0" fill="#2EDC2E"/>
<polygon points="986.0,435.0 996.0,437.0 1002.0,445.0 984.0,441.0" fill="#2EDC2E"/>
<polygon points="988.3,425.8 997.8,427.8 995.8,437.0 985.9,435.0" fill="#8C00FF"/>
<polygon points="984.2,440.2 1003.4,444.3 999.3,462.9 980.7,458.0" fill="#8C00FF"/>
<polygon points="465.0,273.0 494.0,320.0 514.6,356.0 501.0,354.0 480.6,320.0 465.0,294.8" fill="#2EDC2E"/>
<polygon points="464.4,295.9 479.6,321.0 480.8,320.2 465.6,295.1" fill="#FFA030"/>
<polygon points="479.6,321.0 505.4,365.4 506.6,364.6 480.8,320.2" fill="#FFA030"/>
<polygon points="494.4,322.3 514.4,357.3 515.6,356.7 495.6,321.7" fill="#FFA030"/>
<polygon points="540.0,396.0 700.0,429.5 726.0,435.0 726.0,445.0 700.0,437.0 546.6,399.4" fill="#006400"/>
<polygon points="535.3,391.0 700.0,424.0 726.0,430.0 726.0,435.0 700.0,429.5 540.0,396.0" fill="#670067"/>
<polygon points="536.3,376.7 700.0,413.8 729.0,421.4 726.0,430.0 700.0,424.0 535.3,391.0" fill="#5C5C16"/>
<polygon points="536.3,376.7 700.0,413.8 729.0,421.4 729.0,426.6 700.0,419.0 536.3,381.9" fill="#72721E"/>
<polygon points="538.4,365.8 700.0,403.5 731.0,412.0 729.0,421.4 700.0,413.8 536.3,376.7" fill="#2EDC2E"/>
<polygon points="726.0,430.8 726.0,443.0 715.0,438.5 700.0,431.0 688.0,427.3 688.0,423.2 700.0,425.6 715.0,428.7" fill="#45450F"/>
<polygon points="505.4,364.3 516.7,379.8 517.7,394.2 506.4,373.6" fill="#3A0F96"/>
<polygon points="501.2,353.0 538.4,362.3 535.3,381.9 516.7,379.8" fill="#8C00FF"/>
<polygon points="516.7,379.8 534.2,382.9 533.2,398.4 517.7,394.2" fill="#3D0080"/>
<polygon points="533.7,383.2 566.0,390.7 566.0,392.0 546.0,394.0 533.5,395.3" fill="#45450F"/>
<polygon points="754.6,434.8 829.0,567.5 833.0,567.5 765.0,449.3" fill="#28281E"/>
<polygon points="754.6,434.8 765.0,449.3 779.0,473.0 773.0,473.0" fill="#3D0A78"/>
<polygon points="828.5,567.6 833.6,567.6 896.5,671.7 892.4,671.7" fill="#A0A0A0"/>
<polygon points="892.4,671.7 896.5,671.7 907.5,690.0 902.0,690.0" fill="#670067"/>
<polygon points="763.0,449.3 853.6,602.0 906.3,690.0 920.0,690.0 867.0,602.0 772.0,446.0" fill="#2EDC2E"/>
<polygon points="771.9,446.4 866.9,602.4 868.1,601.6 773.1,445.6" fill="#FFA030"/>
<polygon points="866.9,602.4 919.9,690.4 921.1,689.6 868.1,601.6" fill="#FFA030"/>
<polygon points="764.5,449.6 905.8,690.3 906.8,689.7 765.5,449.0" fill="#145014"/>
<polygon points="731.0,409.0 772.0,419.4 748.5,433.8 725.8,430.7" fill="#8C00FF"/>
<polygon points="725.8,430.7 748.5,433.8 745.4,449.3 725.8,445.0" fill="#3D0080"/>
<polygon points="745.4,435.2 750.0,433.0 750.0,450.5 744.9,449.3" fill="#5A5A14"/>
<polygon points="750.0,431.0 756.0,433.5 756.0,452.5 750.0,450.5" fill="#303030"/>
<polygon points="754.6,432.8 771.0,425.0 779.4,440.0 765.0,449.3" fill="#8C00FF"/>
<polygon points="756.4,432.1 772.4,422.6 771.6,421.4 755.6,430.9" fill="#FFA030"/>
<polygon points="514.0,450.7 553.8,460.6 535.3,535.3 495.0,525.6" fill="#B4B4B4"/>
<polygon points="525.7,391.7 490.7,531.7 493.3,532.3 528.3,392.3" fill="#FFA030"/>
<polygon points="555.7,449.0 532.9,542.7 535.5,543.3 558.3,449.6" fill="#FFA030"/>
<line x1="555.5" y1="462.0" x2="537.0" y2="537.0" stroke="#888" stroke-width="1"/>
<polygon points="491.0,370.6 505.3,365.4 505.3,373.5 495.0,379.6" fill="#1E5A32"/>
<polygon points="491.0,370.6 494.0,369.5 497.5,378.0 495.0,379.6" fill="#8A5A1E"/>
<polygon points="502.5,366.4 505.3,365.4 505.3,373.5 503.5,374.5" fill="#8A5A1E"/>
<path d="M484 377.500 A 11.800 11.800 0 0 1 484.500 396" fill="none" stroke="#008000" stroke-width="1" shape-rendering="auto"/>
<polygon points="465.0,336.5 480.6,340.6 480.6,392.0 465.0,397.0" fill="#555555"/>
<g>
<circle cx="476.5" cy="5.0" r="11.8" fill="none" stroke="#008000" stroke-width="1" shape-rendering="auto"/>
<text transform="translate(476.5,11.1) scale(0.82,1)" text-anchor="middle" font-family='"Liberation Sans",sans-serif' font-size="17" fill="#fff">M</text>
<circle cx="476.5" cy="13.4" r="11.8" fill="none" stroke="#008000" stroke-width="1" shape-rendering="auto"/>
<text transform="translate(476.5,19.5) scale(0.82,1)" text-anchor="middle" font-family='"Liberation Sans",sans-serif' font-size="17" fill="#fff">L</text>
<circle cx="477.2" cy="480.3" r="11.8" fill="none" stroke="#008000" stroke-width="1" shape-rendering="auto"/>
<text transform="translate(477.2,486.4) scale(0.82,1)" text-anchor="middle" font-family='"Liberation Sans",sans-serif' font-size="17" fill="#fff">D</text>
<circle cx="477.2" cy="492.8" r="11.8" fill="none" stroke="#008000" stroke-width="1" shape-rendering="auto"/>
<text transform="translate(477.2,498.9) scale(0.82,1)" text-anchor="middle" font-family='"Liberation Sans",sans-serif' font-size="17" fill="#fff">12</text>
<circle cx="477.3" cy="574.0" r="11.8" fill="none" stroke="#008000" stroke-width="1" shape-rendering="auto"/>
<text transform="translate(477.3,580.1) scale(0.82,1)" text-anchor="middle" font-family='"Liberation Sans",sans-serif' font-size="17" fill="#fff">12</text>
<circle cx="477.3" cy="582.0" r="11.8" fill="none" stroke="#008000" stroke-width="1" shape-rendering="auto"/>
<text transform="translate(477.3,588.1) scale(0.82,1)" text-anchor="middle" font-family='"Liberation Sans",sans-serif' font-size="17" fill="#fff">C</text>
<circle cx="477.0" cy="615.6" r="11.8" fill="none" stroke="#008000" stroke-width="1" shape-rendering="auto"/>
<text transform="translate(477.0,621.7) scale(0.82,1)" text-anchor="middle" font-family='"Liberation Sans",sans-serif' font-size="17" fill="#fff">B</text>
</g>
<text x="519" y="691" font-family='"Liberation Sans",sans-serif' font-size="11" fill="#00F000">Y</text>
<path d="M475.500 363 L470 367.300 L475.500 371.600" fill="none" stroke="#C8C8C8" stroke-width="1.300" shape-rendering="auto"/>
</svg>
</body></html>
